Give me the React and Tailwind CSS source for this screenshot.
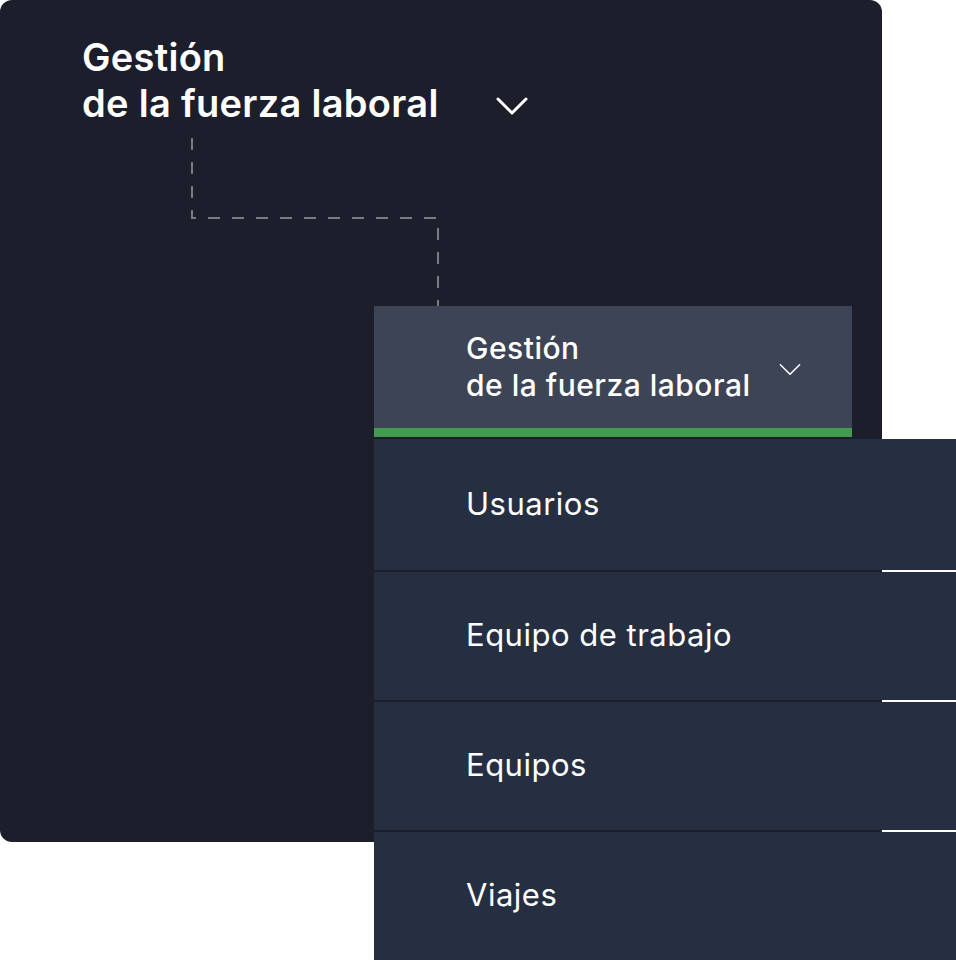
import React from 'react';

const items = [
  { label: 'Usuarios', h: 'h-[131px]' },
  { label: 'Equipo de trabajo', h: 'h-[128px]' },
  { label: 'Equipos', h: 'h-[128px]' },
  { label: 'Viajes', h: 'h-[128px]' },
];

const Chevron = ({ className, stroke = 3 }) => (
  <svg className={className} viewBox="0 0 32 18" fill="none">
    <path d="M2 2 L16 16 L30 2" stroke="currentColor" strokeWidth={stroke} strokeLinecap="round" strokeLinejoin="round" />
  </svg>
);

const App = () => {
  return (
    <div className="w-[956px] h-[960px] bg-white overflow-hidden" style={{ fontFamily: 'Inter, "Noto Sans", sans-serif' }}>
      <div className="w-[882px] h-[842px] bg-[#1c1f2b] rounded-[12px]">
        {/* Title */}
        <div className="flex items-end pl-[82px] pt-[34px] text-white">
          <h1 className="text-[38px] leading-[46px] font-semibold tracking-[0.3px]">
            Gestión
            <br />
            de la fuerza laboral
          </h1>
          <Chevron className="w-[32px] h-[18px] ml-[57px] mb-[11px]" stroke={3} />
        </div>

        {/* Connector */}
        <svg width="882" height="180" className="block">
          <path
            d="M192 12 V92 H438 V180"
            fill="none"
            stroke="#7a7b80"
            strokeWidth="2"
            strokeDasharray="12 12"
          />
        </svg>

        {/* Dropdown */}
        <div className="ml-[374px]">
          <div className="w-[478px] h-[122px] bg-[#3d4456] flex items-center pl-[92px] text-white">
            <div className="text-[30px] leading-[37px] font-medium tracking-[0.5px]">
              Gestión
              <br />
              de la fuerza laboral
            </div>
            <Chevron className="w-[22px] h-[13px] ml-[28px] mt-[4px]" stroke={2.2} />
          </div>
          <div className="w-[478px] h-[9px] bg-[#449a50]" />
          <div className="w-[582px] flex flex-col gap-[2px] mt-[2px]">
            {items.map((item) => (
              <div key={item.label} className={`${item.h} bg-[#262f42] flex items-center pl-[92px]`}>
                <span className="text-[31px] leading-[38px] text-white tracking-[0.5px] -mt-[2px]">{item.label}</span>
              </div>
            ))}
          </div>
        </div>
      </div>
    </div>
  );
};

export default App;
